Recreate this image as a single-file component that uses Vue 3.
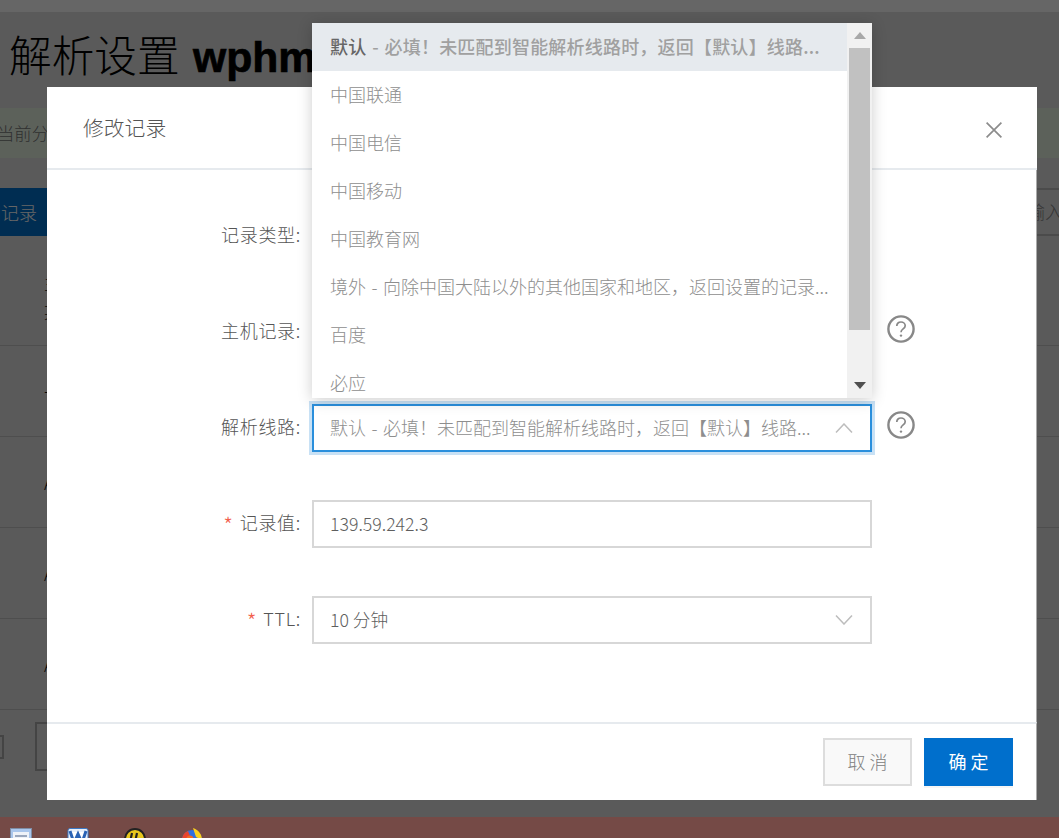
<script setup>
const options = [
  { name: '默认', note: ' - 必填！未匹配到智能解析线路时，返回【默认】线路...', active: true },
  { name: '中国联通' },
  { name: '中国电信' },
  { name: '中国移动' },
  { name: '中国教育网' },
  { name: '境外 - 向除中国大陆以外的其他国家和地区，返回设置的记录...' },
  { name: '百度' },
  { name: '必应' },
  { name: '谷歌' }
]
const rows = ['主机\n某', '一', 'A', 'A', 'A']
</script>

<template>
  <div class="page">
    <div class="backdrop-content">
      <div class="topbar"></div>
      <h1 class="title">解析设置 <b>wphm.com</b></h1>
      <div class="alert">当前分配的 DNS 服务器</div>
      <div class="toolbar">
        <button class="add">添加记录</button>
        <div class="search">请输入</div>
      </div>
      <div class="table">
        <div v-for="(row, i) in rows" :key="i" class="table-row" :class="{ first: i === 0 }">{{ row }}</div>
      </div>
      <div class="pager"><span class="pager-a"></span><span class="pager-b"></span></div>
    </div>
    <div class="overlay"></div>

    <div class="modal">
      <header class="modal-head">
        <span class="head-title">修改记录</span>
        <svg class="close" width="16" height="16" viewBox="0 0 16 16"><path d="M.6.6 15.400 15.400M15.400.6.6 15.400" stroke="#8c8c8c" stroke-width="1.700" fill="none"/></svg>
      </header>
      <div class="modal-body">
        <div class="field">
          <label class="label">记录类型:</label>
          <div class="control"><span>A</span></div>
        </div>
        <div class="field">
          <label class="label">主机记录:</label>
          <div class="control"><span>www</span></div>
          <svg class="help" width="28" height="28" viewBox="0 0 28 28"><circle cx="14" cy="14" r="12.600" stroke="#888" stroke-width="2.400" fill="none"/><path d="M9.800 11c0-2.600 1.900-4 4.200-4s4.200 1.500 4.200 3.700c0 3.300-4.200 3.200-4.200 6.600" stroke="#888" stroke-width="1.700" fill="none"/><circle cx="14" cy="20.600" r="1.200" fill="#888"/></svg>
        </div>
        <div class="field">
          <label class="label">解析线路:</label>
          <div class="control focused">
            <span class="muted">默认 - 必填！未匹配到智能解析线路时，返回【默认】线路...</span>
            <svg class="chev" width="18" height="10" viewBox="0 0 18 10"><path d="M1 9.500 9 1l8 8.500" stroke="#bdbdbd" stroke-width="1.500" fill="none"/></svg>
          </div>
          <svg class="help" width="28" height="28" viewBox="0 0 28 28"><circle cx="14" cy="14" r="12.600" stroke="#888" stroke-width="2.400" fill="none"/><path d="M9.800 11c0-2.600 1.900-4 4.200-4s4.200 1.500 4.200 3.700c0 3.300-4.200 3.200-4.200 6.600" stroke="#888" stroke-width="1.700" fill="none"/><circle cx="14" cy="20.600" r="1.200" fill="#888"/></svg>
        </div>
        <div class="field">
          <label class="label"><i>*</i>记录值:</label>
          <div class="control"><span class="value">139.59.242.3</span></div>
        </div>
        <div class="field">
          <label class="label"><i>*</i>TTL:</label>
          <div class="control">
            <span class="value">10 分钟</span>
            <svg class="chev" width="18" height="10" viewBox="0 0 18 10"><path d="M1 .5 9 9l8-8.500" stroke="#bdbdbd" stroke-width="1.500" fill="none"/></svg>
          </div>
        </div>
      </div>
      <footer class="modal-foot">
        <button class="btn cancel">取 消</button>
        <button class="btn ok">确 定</button>
      </footer>
    </div>

    <div class="dropdown">
      <ul class="list">
        <li v-for="opt in options" :key="opt.name" :class="{ active: opt.active }">
          <b v-if="opt.active">{{ opt.name }}</b><template v-else>{{ opt.name }}</template>{{ opt.note }}
        </li>
      </ul>
      <div class="scrollbar">
        <div class="arrow"><svg width="12" height="7" viewBox="0 0 12 7"><path d="M6 0 12 7H0z" fill="#a8a8a8"/></svg></div>
        <div class="thumb"></div>
        <div class="arrow down"><svg width="12" height="7" viewBox="0 0 12 7"><path d="M0 0H12L6 7z" fill="#505050"/></svg></div>
      </div>
    </div>

    <div class="taskbar">
      <svg width="22" height="22" viewBox="0 0 22 22"><rect x=".5" y=".5" width="21" height="21" fill="#a9c6ec" stroke="#7f8ea6"/><rect x="3" y="4" width="16" height="14" fill="#eef2f8"/><rect x="5" y="7" width="12" height="2" fill="#9aa7bd"/><rect x="6" y="11" width="16" height="11" fill="#cfd3d8"/></svg>
      <svg width="22" height="22" viewBox="0 0 22 22"><rect x="1" y=".5" width="20" height="21" rx="2" fill="#e9f0fa" stroke="#3c78c4"/><path d="M3 4h16v14H3z" fill="#fff"/><path d="M3 3 7 15l4-9 4 9 4-12" stroke="#2a62b4" stroke-width="3" fill="none"/></svg>
      <svg width="22" height="22" viewBox="0 0 22 22"><circle cx="11" cy="11" r="10" fill="#e8c81e" stroke="#222" stroke-width="2"/><path d="M8 5 6.500 12M13 5l-1.500 7" stroke="#222" stroke-width="2.200"/></svg>
      <svg width="22" height="22" viewBox="0 0 22 22"><circle cx="11" cy="12" r="10" fill="#2f6fe0"/><path d="M1 12a10 10 0 0 1 6-9l2 5-3 3z" fill="#e8432c"/><path d="M12 0c6 2 9 7 9 12l-6-3z" fill="#fbd21e"/><circle cx="9" cy="11" r="3.500" fill="#f26b21"/></svg>
    </div>
  </div>
</template>

<style>
html, body { margin: 0; }
</style>

<style scoped>
* { box-sizing: border-box; }
.page {
  position: relative;
  width: 1059px;
  height: 838px;
  overflow: hidden;
  display: flex;
  flex-direction: column;
  justify-content: flex-end;
  font-family: "Noto Sans CJK SC", "Open Sans", sans-serif;
  font-size: 18px;
  font-weight: 300;
  color: #666;
}
.backdrop-content {
  position: absolute;
  inset: 0;
  background: #e2e2e2;
  overflow: hidden;
}
.topbar { height: 12px; background: #fff; }
.title {
  margin: 0;
  height: 96px;
  padding: 17px 0 0 9px;
  font-size: 42.67px;
  line-height: 50px;
  font-weight: 300;
  color: #000;
  white-space: nowrap;
}
.title b {
  margin-left: 4px;
  font-family: "Liberation Sans", sans-serif;
  font-weight: 700;
  -webkit-text-stroke: .7px #000;
}
.alert {
  height: 50px;
  margin-left: -3px;
  line-height: 50px;
  font-size: 17.33px;
  background: #e6f2e2;
  color: #777;
}
.toolbar { display: flex; justify-content: space-between; margin-top: 30px; height: 48px; }
.add {
  width: 92px;
  margin-left: -45px;
  border: 0;
  padding: 0;
  font: inherit;
  background: #0070cc;
  color: #fff;
}
.search {
  width: 100px;
  margin-right: -36px;
  padding-left: 12px;
  line-height: 42px;
  border: 2px solid #bbb;
  color: #888;
  white-space: nowrap;
  overflow: hidden;
}
.table { margin-top: 19px; }
.table-row {
  height: 91px;
  padding-left: 44px;
  display: flex;
  align-items: center;
  white-space: pre-line;
  line-height: 29px;
  font-size: 17.33px;
  color: #111;
  border-bottom: 1px solid #c4c4c4;
}
.table-row.first { padding-bottom: 6px; }
.pager { display: flex; align-items: center; margin-top: 12px; gap: 31px; height: 49px; }
.pager-a { width: 4px; height: 24px; border: 2px solid #aaa; border-left: 0; }
.pager-b { width: 60px; height: 49px; border: 2px solid #aaa; }

.overlay { position: absolute; inset: 0; background: rgba(0, 0, 0, .6); }

.modal {
  position: absolute;
  left: 47px;
  top: 87px;
  width: 990px;
  height: 713px;
  background: #fff;
  display: flex;
  flex-direction: column;
}
.modal-head {
  height: 83px;
  padding: 0 36px;
  display: flex;
  align-items: center;
  justify-content: space-between;
  font-size: 20.800px;
  color: #555;
  border-bottom: 2px solid #e6eaee;
}
.head-title { margin-bottom: 2px; }
.close { margin-top: 4px; margin-right: -1px; }
.modal-body {
  flex: 1;
  padding-top: 42px;
  display: flex;
  flex-direction: column;
  gap: 48px;
  border-right: 1px solid #aaa;
}
.field { display: flex; align-items: center; height: 48px; }
.label {
  width: 254px;
  margin-right: 11px;
  margin-bottom: 4px;
  text-align: right;
  white-space: nowrap;
  letter-spacing: .7px;
  color: #555;
}
.label i { font-style: normal; color: #f2604d; margin-right: 6px; font-size: 22px; line-height: 1; vertical-align: -4px; }
.control {
  width: 560px;
  height: 48px;
  padding: 0 17px 0 16px;
  border: 2px solid #d7d7d7;
  display: flex;
  align-items: center;
  justify-content: space-between;
  white-space: nowrap;
  word-spacing: 1.500px;
  color: #666;
}
.control > span { margin-bottom: 3px; }
.control.focused {
  border-color: #2a8fdc;
  box-shadow: 0 0 0 3px #c8e1f5;
}
.muted { color: #8e8e8e; }
.value { color: #5e5e5e; font-size: 17.700px; word-spacing: 0; }
.chev { flex: none; margin-right: 0; }
.help { margin-left: 15px; flex: none; margin-top: -6px; }

.modal-foot {
  height: 78px;
  padding: 14px 24px 0 0;
  border-top: 2px solid #e6eaee;
  border-right: 1px solid #aaa;
  display: flex;
  justify-content: flex-end;
  gap: 12px;
}
.btn {
  width: 89px;
  height: 48px;
  padding: 0 0 2px;
  font: inherit;
}
.cancel { background: #f9f9f9; border: 2px solid #ddd; color: #808080; }
.ok { background: #006fcc; border: 0; color: #fff; box-shadow: 0 2px 0 #f6f6f6; margin-right: -1px; font-weight: 400; }

.dropdown {
  position: absolute;
  left: 312px;
  top: 23px;
  width: 560px;
  height: 375px;
  display: flex;
  background: #fff;
  box-shadow: 0 2px 14px rgba(0, 0, 0, .2);
}
.list {
  flex: 1;
  min-width: 0;
  margin: 0;
  padding: 0;
  list-style: none;
  overflow: hidden;
}
.list li {
  height: 48px;
  line-height: 46px;
  padding-left: 18px;
  white-space: nowrap;
  word-spacing: 1.500px;
  color: #8e8e8e;
}
.list li.active { background: #e6eaee; color: #a0a0a0; font-weight: 500; letter-spacing: .2px; }
.list li.active b { color: #666; font-weight: 500; }
.scrollbar {
  width: 25px;
  padding: 0 2px;
  background: #f1f1f1;
  display: flex;
  flex-direction: column;
}
.arrow { height: 25px; display: flex; align-items: center; justify-content: center; }
.thumb { height: 282px; background: #c1c1c1; }
.arrow.down { margin-top: auto; }

.taskbar {
  position: relative;
  height: 21px;
  overflow: hidden;
  background: #754a46;
  display: flex;
  align-items: flex-start;
  gap: 35px;
  padding: 11px 0 0 10px;
}
.taskbar svg { flex: none; }
</style>
